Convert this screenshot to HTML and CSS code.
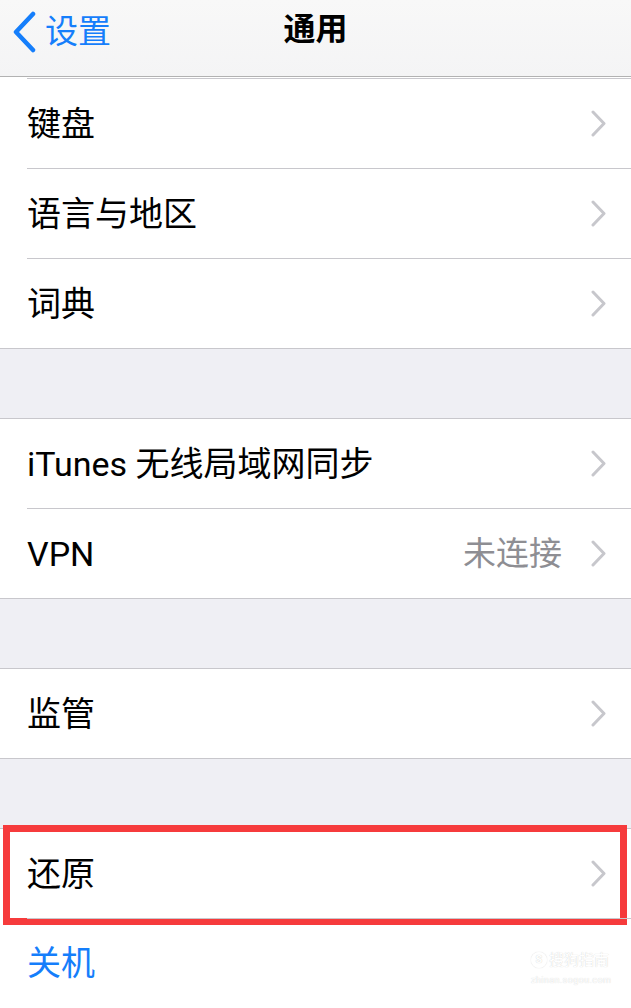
FILE: index.html
```html
<!DOCTYPE html>
<html lang="zh-CN">
<head>
  <meta charset="UTF-8" />
  <meta name="viewport" content="width=device-width, initial-scale=1.0" />
  <title>通用</title>
  <link rel="stylesheet" href="styles.css">
</head>
<body>
  <header class="nav-bar">
    <a class="nav-back" href="#">
      <svg class="back-icon" width="26" height="42" viewBox="0 0 26 42">
        <path d="M22 3 L5 21 L22 39" fill="none" stroke="#157efb" stroke-width="4.5" stroke-linecap="round" stroke-linejoin="round"/>
      </svg>
      <span>设置</span>
    </a>
    <h1 class="nav-title">通用</h1>
  </header>

  <div class="group">
    <div class="row-peek"></div>
    <div class="row"><span class="row-label">键盘</span><span class="chevron"></span></div>
    <div class="row"><span class="row-label">语言与地区</span><span class="chevron"></span></div>
    <div class="row"><span class="row-label">词典</span><span class="chevron"></span></div>
  </div>

  <div class="gap"></div>

  <div class="group">
    <div class="row"><span class="row-label">iTunes 无线局域网同步</span><span class="chevron"></span></div>
    <div class="row"><span class="row-label">VPN</span><span class="row-value">未连接</span><span class="chevron"></span></div>
  </div>

  <div class="gap"></div>

  <div class="group">
    <div class="row"><span class="row-label">监管</span><span class="chevron"></span></div>
  </div>

  <div class="gap"></div>

  <div class="group">
    <div class="row row-marked">
      <span class="row-label">还原</span><span class="chevron"></span>
      <div class="highlight-box"></div>
    </div>
    <div class="row"><span class="row-label row-action">关机</span></div>
  </div>

  <div class="watermark">
    <div class="wm-top"><span class="wm-logo">S</span>搜狗指南</div>
    <div class="wm-url">zhinan.sogou.com</div>
  </div>
</body>
</html>
```

FILE: styles.css
```css
body {
  margin: 0;
  padding: 0;
  font-family: Roboto, "Noto Sans CJK SC", sans-serif;
  background-color: #fff;
  width: 631px;
  height: 1008px;
  overflow: hidden;
  position: relative;
}

/* Barra de navegación */
.nav-bar {
  height: 76px;
  background: linear-gradient(#f8f8f8, #f4f4f5);
  border-bottom: 1px solid #b2b2b2;
  display: flex;
  align-items: flex-start;
  justify-content: center;
  position: relative;
}

.nav-back {
  position: absolute;
  left: 11px;
  top: 11px;
  display: flex;
  align-items: center;
  gap: 8px;
  color: #157efb;
  text-decoration: none;
  font-size: 33px;
  line-height: 42px;
}

.nav-title {
  margin: 0;
  padding-top: 13px;
  font-size: 32px;
  font-weight: 700;
  color: #000;
  line-height: 1;
}

/* Grupos de celdas */
.group {
  background-color: #fff;
  border-top: 1px solid #c8c7cc;
  border-bottom: 1px solid #c8c7cc;
}

.group:first-of-type {
  border-top: none;
}

.row-peek {
  height: 1px;
  border-bottom: 1px solid #c8c7cc;
  margin-left: 27px;
}

.row {
  height: 89px;
  display: flex;
  align-items: center;
  padding: 0 25px 0 27px;
  position: relative;
}

.row + .row::before { /* separador con sangría */
  content: "";
  position: absolute;
  top: -1px;
  left: 27px;
  right: 0;
  border-top: 1px solid #c8c7cc;
}

.row + .row {
  margin-top: 1px;
}

.row-label {
  flex: 1;
  font-size: 34px;
  color: #000;
  line-height: 1;
}

.row-value {
  font-size: 33px;
  color: #8e8e93;
  margin-right: 29px;
  line-height: 1;
}

.row-action {
  color: #157efb;
  margin-top: -2px;
}

.chevron {
  width: 15px;
  height: 27px;
  flex: none;
  background: url("data:image/svg+xml,%3Csvg xmlns='http://www.w3.org/2000/svg' width='15' height='27' viewBox='0 0 15 27'%3E%3Cpath d='M2 2 L13 13.5 L2 25' fill='none' stroke='%23c7c7cc' stroke-width='3' stroke-linecap='round' stroke-linejoin='round'/%3E%3C/svg%3E") no-repeat center;
}

.gap {
  height: 69px;
  background-color: #efeff4;
}

/* Recuadro rojo de la captura */
.highlight-box {
  position: absolute;
  top: -4px;
  bottom: -7px;
  left: 3px;
  right: 4px;
  border: 7px solid #f63b3c;
  box-sizing: border-box;
  pointer-events: none;
}

/* Marca de agua */
.watermark {
  position: absolute;
  left: 531px;
  top: 951px;
  color: #fff;
  text-shadow: 0 0 1px rgba(0, 0, 0, 0.22);
}

.wm-top {
  display: flex;
  align-items: center;
  font-size: 15px;
  line-height: 18px;
}

.wm-logo {
  width: 14px;
  height: 14px;
  border-radius: 50%;
  border: 1px solid #fff;
  box-shadow: 0 0 1px rgba(0, 0, 0, 0.22);
  font-size: 11px;
  line-height: 14px;
  text-align: center;
  font-weight: 700;
  margin-right: 2px;
}

.wm-url {
  font-size: 9px;
  line-height: 12px;
  margin-top: 5px;
  letter-spacing: 0.4px;
}
```
